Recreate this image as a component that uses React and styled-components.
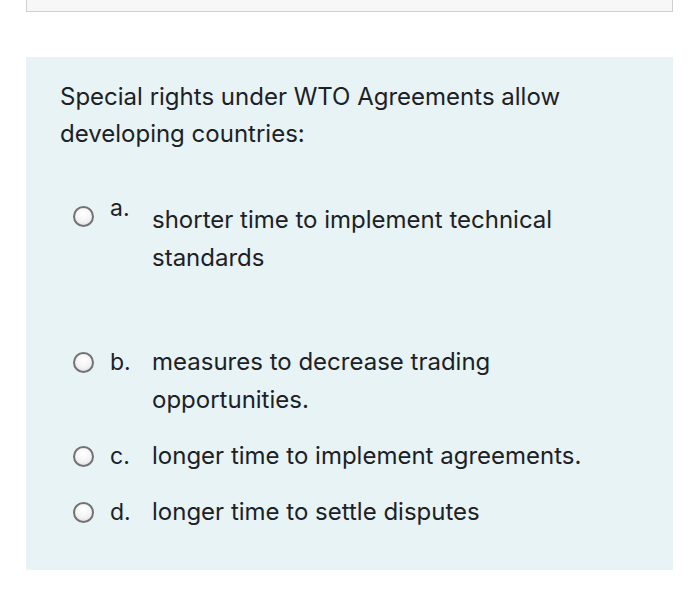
import React from "react";
import styled, { createGlobalStyle } from "styled-components";

const Global = createGlobalStyle`
  html, body { margin: 0; padding: 0; background: #ffffff; }
  body { font-family: Inter, "Noto Sans", sans-serif; color: #1d2125; }
`;

const Page = styled.div`
  width: 700px;
  height: 596px;
  overflow: hidden;
  display: flex;
  flex-direction: column;
  padding: 0 27px 0 26px;
  box-sizing: border-box;
`;

const TopBox = styled.div`
  height: 12px;
  box-sizing: border-box;
  background: #f7f7f7;
  border: 1px solid #cfcfcf;
  border-top: none;
`;

const Panel = styled.div`
  margin-top: 45px;
  height: 513px;
  box-sizing: border-box;
  background: #e7f3f5;
  padding: 21px 0 0 34px;
`;

const Question = styled.div`
  font-size: 24px;
  line-height: 37px;
  margin-bottom: 45px;
`;

const Options = styled.div`
  display: flex;
  flex-direction: column;
  padding-left: 13px;
`;

const Option = styled.div`
  display: flex;
  align-items: flex-start;
  margin-bottom: ${(p) => p.$gap}px;
`;

const Radio = styled.span`
  flex: none;
  width: 21px;
  height: 21px;
  margin-top: 9px;
  box-sizing: border-box;
  border-radius: 50%;
  border: 2px solid #727272;
  background: radial-gradient(circle at 50% 35%, #ffffff 0%, #f3f3f3 55%, #d6d6d6 100%);
`;

const Letter = styled.span`
  flex: none;
  width: 42px;
  margin-left: 16px;
  font-size: 23px;
  line-height: 38px;
  margin-top: ${(p) => (p.$raised ? -8 : 0)}px;
`;

const Text = styled.span`
  font-size: 24px;
  line-height: 38px;
  margin-top: ${(p) => p.$shift}px;
`;

const options = [
  { l: "a.", lines: ["shorter time to implement technical", "standards"], shift: 4, raised: true, gap: 66 },
  { l: "b.", lines: ["measures to decrease trading", "opportunities."], shift: 0, gap: 18 },
  { l: "c.", lines: ["longer time to implement agreements."], shift: 0, gap: 18 },
  { l: "d.", lines: ["longer time to settle disputes"], shift: 0, gap: 0 },
];

export default function App() {
  return (
    <>
      <Global />
      <Page>
        <TopBox />
        <Panel>
          <Question>
            Special rights under WTO Agreements allow
            <br />
            developing countries:
          </Question>
          <Options>
            {options.map((o) => (
              <Option key={o.l} $gap={o.gap}>
                <Radio />
                <Letter $raised={o.raised}>{o.l}</Letter>
                <Text $shift={o.shift}>
                  {o.lines.map((t, i) => (
                    <React.Fragment key={i}>
                      {i > 0 && <br />}
                      {t}
                    </React.Fragment>
                  ))}
                </Text>
              </Option>
            ))}
          </Options>
        </Panel>
      </Page>
    </>
  );
}
